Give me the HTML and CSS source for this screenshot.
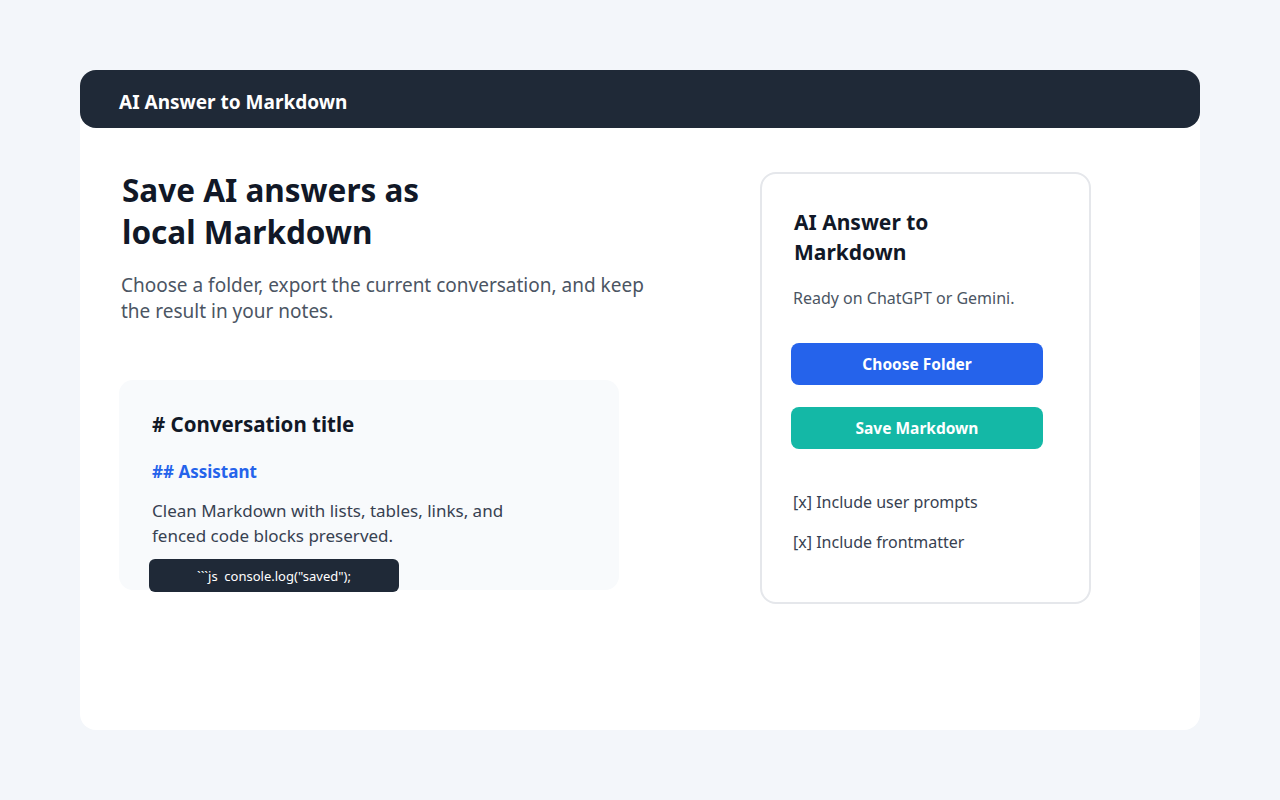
FILE: index.html
```html
<!DOCTYPE html>
<html lang="en">
<head>
<meta charset="utf-8">
<title>AI Answer to Markdown</title>
<link rel="stylesheet" href="styles.css">
</head>
<body>
<main class="frame">
  <header class="topbar">AI Answer to Markdown</header>
  <div class="content">
    <section class="hero">
      <h1 class="hero-title">Save AI answers as<br>local Markdown</h1>
      <p class="hero-text">Choose a folder, export the current conversation, and keep the result in your notes.</p>
      <div class="preview">
        <div class="pv-h1"># Conversation title</div>
        <div class="pv-h2">## Assistant</div>
        <p class="pv-text">Clean Markdown with lists, tables, links, and fenced code blocks preserved.</p>
        <div class="pv-code">```js&nbsp; console.log("saved");</div>
      </div>
    </section>
    <aside class="panel">
      <h2 class="panel-title">AI Answer to Markdown</h2>
      <p class="panel-status">Ready on ChatGPT or Gemini.</p>
      <button class="btn btn-blue">Choose Folder</button>
      <button class="btn btn-teal">Save Markdown</button>
      <div class="options">
        <div class="opt">[x] Include user prompts</div>
        <div class="opt">[x] Include frontmatter</div>
      </div>
    </aside>
  </div>
</main>
</body>
</html>
```

FILE: styles.css
```css
* { box-sizing: border-box; }
html, body { margin: 0; padding: 0; }
body {
  background: #f3f6fa;
  font-family: "Noto Sans", "Open Sans", sans-serif;
  color: #111827;
  padding: 70px 80px;
}
.frame {
  background: #ffffff;
  border-radius: 16px;
  height: 660px;
}
.topbar {
  background: #1f2937;
  color: #ffffff;
  border-radius: 16px;
  height: 58px;
  padding: 5px 39px 0;
  display: flex;
  align-items: center;
  font-weight: 700;
  font-size: 19px;
}
.content {
  display: flex;
  align-items: flex-start;
  padding: 41px 0 0 39px;
}
.hero {
  width: 600px;
}
.hero-title {
  margin: 0 0 0 3px;
  font-size: 31.5px;
  line-height: 42px;
  font-weight: 700;
  color: #111827;
}
.hero-text {
  margin: 19px 0 0 2px;
  font-size: 19px;
  line-height: 26px;
  color: #4b5563;
  width: 540px;
}
.preview {
  margin-top: 56px;
  width: 500px;
  height: 210px;
  background: #f8fafc;
  border-radius: 14px;
  padding: 28px 33px 0;
}
.pv-h1 {
  font-size: 20.5px;
  font-weight: 700;
  line-height: 32px;
  color: #111827;
}
.pv-h2 {
  margin-top: 20px;
  font-size: 17px;
  font-weight: 700;
  line-height: 24px;
  color: #2563eb;
}
.pv-text {
  margin: 14px 0 0;
  font-size: 17px;
  line-height: 25px;
  color: #374151;
  width: 360px;
}
.pv-code {
  margin: 11px 0 0 -3px;
  width: 250px;
  height: 33px;
  background: #1f2937;
  color: #ffffff;
  border-radius: 6px;
  font-size: 13px;
  display: flex;
  align-items: center;
  justify-content: center;
  white-space: pre;
}
.panel {
  margin: 3px 0 0 41px;
  width: 331px;
  height: 432px;
  border: 2px solid #e5e7eb;
  border-radius: 16px;
  padding: 33px 30px 0 29px;
  display: flex;
  flex-direction: column;
  align-items: flex-start;
}
.panel-title {
  margin: 0 0 0 3px;
  font-size: 21px;
  line-height: 30px;
  font-weight: 700;
  width: 200px;
  color: #111827;
}
.panel-status {
  margin: 19px 0 0 2px;
  font-size: 16px;
  line-height: 24px;
  color: #4b5563;
}
.btn {
  font-family: inherit;
  border: none;
  width: 252px;
  height: 42px;
  border-radius: 8px;
  color: #ffffff;
  font-weight: 700;
  font-size: 15.5px;
  padding: 0;
}
.btn-blue { background: #2563eb; margin-top: 33px; }
.btn-teal { background: #14b8a6; margin-top: 22px; }
.options {
  margin-top: 41px;
  display: flex;
  flex-direction: column;
  gap: 16px;
}
.opt {
  margin-left: 2px;
  font-size: 16px;
  line-height: 24px;
  color: #374151;
}
```
